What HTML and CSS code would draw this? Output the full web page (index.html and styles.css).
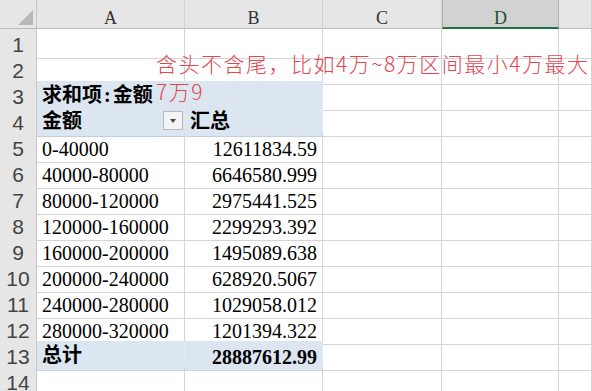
FILE: index.html
```html
<!DOCTYPE html>
<html lang="zh">
<head>
<meta charset="utf-8">
<title>数据透视表</title>
<link rel="stylesheet" href="styles.css">
</head>
<body>
<div class="sheet">
  <div class="row hdr">
    <div class="corner"><svg width="36" height="28" viewBox="0 0 36 28"><polygon points="33,10 33,25 18,25" fill="#b8b8b8"/></svg></div>
    <div class="ch">A</div><div class="ch">B</div><div class="ch">C</div><div class="ch sel">D</div><div class="ch"></div>
  </div>
  <div class="row"><div class="rh">1</div><div class="c"></div><div class="c"></div><div class="c"></div><div class="c"></div><div class="c"></div></div>
  <div class="row"><div class="rh">2</div><div class="c"></div><div class="c"></div><div class="c"></div><div class="c"></div><div class="c"></div></div>
  <div class="row"><div class="rh">3</div><div class="c pv pvtop b cjk">求和项<span class="colon">:</span>金额</div><div class="c pv pvtop"></div><div class="c"></div><div class="c"></div><div class="c"></div></div>
  <div class="row"><div class="rh">4</div><div class="c pv pvhead b cjk fcell"><span>金额</span><span class="dd"></span></div><div class="c pv pvhead b cjk">汇总</div><div class="c"></div><div class="c"></div><div class="c"></div></div>
  <div class="row"><div class="rh">5</div><div class="c">0-40000</div><div class="c num">12611834.59</div><div class="c"></div><div class="c"></div><div class="c"></div></div>
  <div class="row"><div class="rh">6</div><div class="c">40000-80000</div><div class="c num">6646580.999</div><div class="c"></div><div class="c"></div><div class="c"></div></div>
  <div class="row"><div class="rh">7</div><div class="c">80000-120000</div><div class="c num">2975441.525</div><div class="c"></div><div class="c"></div><div class="c"></div></div>
  <div class="row"><div class="rh">8</div><div class="c">120000-160000</div><div class="c num">2299293.392</div><div class="c"></div><div class="c"></div><div class="c"></div></div>
  <div class="row"><div class="rh">9</div><div class="c">160000-200000</div><div class="c num">1495089.638</div><div class="c"></div><div class="c"></div><div class="c"></div></div>
  <div class="row"><div class="rh">10</div><div class="c">200000-240000</div><div class="c num">628920.5067</div><div class="c"></div><div class="c"></div><div class="c"></div></div>
  <div class="row"><div class="rh">11</div><div class="c">240000-280000</div><div class="c num">1029058.012</div><div class="c"></div><div class="c"></div><div class="c"></div></div>
  <div class="row"><div class="rh">12</div><div class="c pre">280000-320000</div><div class="c num pre">1201394.322</div><div class="c"></div><div class="c"></div><div class="c"></div></div>
  <div class="row"><div class="rh">13</div><div class="c pv b cjk">总计</div><div class="c pv b num">28887612.99</div><div class="c"></div><div class="c"></div><div class="c"></div></div>
  <div class="row"><div class="rh">14</div><div class="c"></div><div class="c"></div><div class="c"></div><div class="c"></div><div class="c"></div></div>
</div>
<div class="note">含头不含尾，比如4万~8万区间最小4万最大<br>7万9</div>
</body>
</html>
```

FILE: styles.css
```css
* { box-sizing: border-box; }

body {
  margin: 0;
  background: #ffffff;
  overflow: hidden;
  font-family: "Liberation Serif", "Noto Sans CJK SC", serif;
  color: #000;
}

.sheet {
  width: 592px;
}

.row {
  display: grid;
  grid-template-columns: 37px 148px 138px 119px 117px 33px;
  height: 26px;
}

.row.hdr {
  height: 29px;
}

.corner {
  background: #e6e6e6;
  border-right: 1px solid #c8c8c8;
  border-bottom: 1px solid #bcbcbc;
}

.corner svg {
  display: block;
}

.ch {
  background: #e6e6e6;
  border-right: 1px solid #d2d2d2;
  border-bottom: 1px solid #bcbcbc;
  font-size: 18px;
  line-height: 28px;
  padding-top: 4px;
  text-align: center;
  color: #333;
  overflow: hidden;
}

.ch.sel {
  background: #d2d2d2;
  border-left: 1px solid #b0b0b0;
  border-right: 1px solid #b0b0b0;
  border-bottom: 2px solid #217346;
  color: #1f4f35;
}

.rh {
  background: #e6e6e6;
  border-right: 1px solid #c8c8c8;
  border-bottom: 1px solid #d4d4d4;
  font-family: "Liberation Sans", sans-serif;
  font-size: 21px;
  line-height: 26px;
  padding-top: 3px;
  text-align: center;
  color: #444;
}

.c {
  border-right: 1px solid #d4d4d4;
  border-bottom: 1px solid #d4d4d4;
  font-size: 20px;
  line-height: 26px;
  padding: 3px 5px 0 5px;
  white-space: nowrap;
}

.c.cjk {
  padding-top: 1px;
}

.c.num {
  text-align: right;
}

.c.b {
  font-weight: 700;
}

.colon {
  margin: 0 2px;
}

.c.pv {
  background: #dce6f1;
  border-right-color: #e4eaf2;
}

.c.pvtop {
  border-bottom-color: #dce6f1;
}

.c.pvhead {
  border-bottom-color: #c3cfdf;
}

.c.pre {
  border-bottom-color: #a9bdd8;
}

.fcell {
  display: flex;
  align-items: flex-start;
  padding-right: 1px;
}

.dd {
  margin-left: auto;
  margin-top: 3px;
  width: 20px;
  height: 19px;
  background: #f4f4f4;
  border: 1px solid #b9b9b9;
  display: flex;
  align-items: center;
  justify-content: center;
}

.dd::after {
  content: "";
  display: block;
  width: 0;
  height: 0;
  border-left: 3.5px solid transparent;
  border-right: 3.5px solid transparent;
  border-top: 4px solid #444;
}

.note {
  position: absolute;
  left: 156px;
  top: 49px;
  font-family: "Noto Sans CJK SC", sans-serif;
  font-size: 21px;
  font-weight: 300;
  line-height: 28px;
  letter-spacing: 1.5px;
  color: #e2464f;
  white-space: nowrap;
}
```
